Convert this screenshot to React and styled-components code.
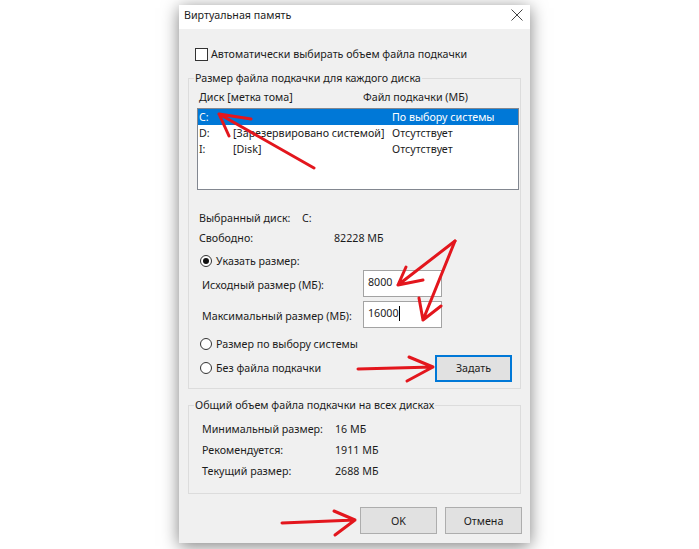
import React from 'react'
import styled, {createGlobalStyle} from 'styled-components'


const GlobalStyle = createGlobalStyle`
    html, body {
        margin: 0;
        padding: 0;
        background: #fff;
    }
    body {
        font-family: "Noto Sans", "Liberation Sans", sans-serif;
        font-size: 10.7px;
        color: #1c1c1c;
        white-space: nowrap;
    }
`;

const Page = styled.div`
    position: relative;
    width: 699px;
    height: 549px;
    overflow: hidden;
    box-sizing: border-box;
    padding: 5px 0 0 179px;
`;

const Dialog = styled.div`
    width: 351px;
    height: 538px;
    background: #f0f0f0;
    box-shadow: 0 3px 16px rgba(0, 0, 0, 0.5);
    display: flex;
    flex-direction: column;
`;

const TitleBar = styled.div`
    height: 24px;
    background: #fff;
    display: flex;
    align-items: flex-start;
    justify-content: space-between;
    padding: 2px 7px 0 5px;
    box-sizing: border-box;
    line-height: 16px;
`;

const CloseBtn = styled.svg`
    margin-top: 2px;
`;

const Body = styled.div`
    display: flex;
    flex-direction: column;
    padding: 0 9px;
`;

const CheckRow = styled.label`
    display: flex;
    align-items: center;
    height: 16px;
    margin: 17px 0 0 7px;
    gap: 3px;
`;

const CheckBox = styled.span`
    width: 11px;
    height: 11px;
    border: 1px solid #333;
    background: #fff;
`;

const Group = styled.fieldset`
    margin: ${p => p.$top}px 0 0 0;
    padding: 0;
    height: ${p => p.$height}px;
    box-sizing: border-box;
    border: 1px solid #dcdcdc;
    min-width: 0;
    display: flex;
    flex-direction: column;
`;

const Legend = styled.legend`
    margin-left: 5px;
    padding: 0 1px;
    line-height: 16px;
`;

const Columns = styled.div`
    display: grid;
    grid-template-columns: 164px 1fr;
    height: 16px;
    line-height: 16px;
    margin: 3px 0 0 10px;
`;

const ListBox = styled.div`
    margin: 3px 0 0 8px;
    width: 322px;
    height: 82px;
    box-sizing: border-box;
    border: 1px solid #828790;
    background: #fff;
`;

const ListRow = styled.div`
    display: grid;
    grid-template-columns: 34px 159px 1fr;
    height: 16px;
    line-height: 16px;
    padding-left: 1px;
    background: ${p => p.$selected ? '#0078d7' : 'transparent'};
    color: ${p => p.$selected ? '#fff' : 'inherit'};
`;

const InfoRow = styled.div`
    display: grid;
    grid-template-columns: ${p => p.$col}px 1fr;
    height: 16px;
    line-height: 16px;
    margin: ${p => p.$top}px 0 0 ${p => p.$left}px;
`;

const RadioRow = styled.div`
    display: flex;
    align-items: center;
    gap: 4px;
    height: 16px;
    margin: ${p => p.$top}px 0 0 11px;
`;

const Radio = styled.span`
    width: 10px;
    height: 10px;
    border: 1px solid #333;
    border-radius: 50%;
    background: #fff;
    display: flex;
    align-items: center;
    justify-content: center;

    &::after {
        content: '';
        width: 6px;
        height: 6px;
        border-radius: 50%;
        background: ${p => p.$checked ? '#111' : 'transparent'};
    }
`;

const FieldRow = styled.div`
    display: grid;
    grid-template-columns: 161px 79px;
    align-items: center;
    margin: ${p => p.$top}px 0 0 13px;
`;

const FieldLabel = styled.span`
    padding-top: 3px;
`;

const TextInput = styled.div`
    height: 27px;
    box-sizing: border-box;
    border: 1px solid #a3a3a3;
    background: #fff;
    padding: 3px 0 0 4px;
    line-height: 16px;
    display: flex;
    align-items: flex-start;
`;

const Caret = styled.span`
    width: 1px;
    height: 15px;
    background: #000;
    margin-top: 1px;
`;

const SetRow = styled.div`
    display: flex;
    align-items: center;
    justify-content: space-between;
    height: 26px;
    margin: 3px 8px 0 11px;
`;

const RadioLabel = styled.span`
    display: flex;
    align-items: center;
    gap: 4px;
`;

const Button = styled.button`
    width: ${p => p.$width}px;
    height: 27px;
    box-sizing: border-box;
    font: inherit;
    color: inherit;
    background: #e1e1e1;
    border: 1px solid ${p => p.$focused ? '#0078d7' : '#adadad'};
    box-shadow: ${p => p.$focused ? 'inset 0 0 0 1px #0078d7' : 'none'};
    padding: 0;
`;

const Footer = styled.div`
    display: flex;
    justify-content: flex-end;
    gap: 8px;
    margin: 13px -1px 0 0;
`;

const Arrows = styled.svg`
    position: absolute;
    left: 0;
    top: 0;
    pointer-events: none;
`;


const drives = [
    {id: 'C:', label: '', size: 'По выбору системы', selected: true},
    {id: 'D:', label: '[Зарезервировано системой]', size: 'Отсутствует'},
    {id: 'I:', label: '[Disk]', size: 'Отсутствует'},
];

const arrowPaths = [
    'M314 168 L219 114 M219 114 L251 119 M219 114 L229 136',
    'M455 241 L398 285 M398 285 L406 267 M398 285 L423 280',
    'M455 241 L423 320 M423 320 L419 298 M423 320 L441 306',
    'M358 369 L433 367 M409 357 L433 367 L407 381',
    'M282 523 L355 520 M334 511 L355 520 L335 535',
];


const App = () => {
    return (
        <Page>
            <GlobalStyle/>
            <Dialog>
                <TitleBar>
                    <span>Виртуальная память</span>
                    <CloseBtn width="12" height="12" viewBox="0 0 12 12">
                        <path d="M0.5 0.5 L11.5 11.5 M11.5 0.5 L0.5 11.5" stroke="#444" strokeWidth="1" fill="none"/>
                    </CloseBtn>
                </TitleBar>
                <Body>
                    <CheckRow>
                        <CheckBox/>
                        Автоматически выбирать объем файла подкачки
                    </CheckRow>

                    <Group $top={8} $height={319}>
                        <Legend>Размер файла подкачки для каждого диска</Legend>
                        <Columns>
                            <span>Диск [метка тома]</span>
                            <span>Файл подкачки (МБ)</span>
                        </Columns>
                        <ListBox>
                            {drives.map(d => (
                                <ListRow key={d.id} $selected={d.selected}>
                                    <span>{d.id}</span>
                                    <span>{d.label}</span>
                                    <span>{d.size}</span>
                                </ListRow>
                            ))}
                        </ListBox>
                        <InfoRow $top={20} $left={10} $col={103}>
                            <span>Выбранный диск:</span>
                            <span>C:</span>
                        </InfoRow>
                        <InfoRow $top={4} $left={10} $col={135}>
                            <span>Свободно:</span>
                            <span>82228 МБ</span>
                        </InfoRow>
                        <RadioRow $top={7}>
                            <Radio $checked/>
                            Указать размер:
                        </RadioRow>
                        <FieldRow $top={1}>
                            <FieldLabel>Исходный размер (МБ):</FieldLabel>
                            <TextInput>8000</TextInput>
                        </FieldRow>
                        <FieldRow $top={4}>
                            <FieldLabel>Максимальный размер (МБ):</FieldLabel>
                            <TextInput>16000<Caret/></TextInput>
                        </FieldRow>
                        <RadioRow $top={8}>
                            <Radio/>
                            Размер по выбору системы
                        </RadioRow>
                        <SetRow>
                            <RadioLabel>
                                <Radio/>
                                Без файла подкачки
                            </RadioLabel>
                            <Button $width={77} $focused>Задать</Button>
                        </SetRow>
                    </Group>

                    <Group $top={8} $height={97}>
                        <Legend>Общий объем файла подкачки на всех дисках</Legend>
                        <InfoRow $top={8} $left={13} $col={133}>
                            <span>Минимальный размер:</span>
                            <span>16 МБ</span>
                        </InfoRow>
                        <InfoRow $top={5} $left={13} $col={133}>
                            <span>Рекомендуется:</span>
                            <span>1911 МБ</span>
                        </InfoRow>
                        <InfoRow $top={5} $left={13} $col={133}>
                            <span>Текущий размер:</span>
                            <span>2688 МБ</span>
                        </InfoRow>
                    </Group>

                    <Footer>
                        <Button $width={77}>OK</Button>
                        <Button $width={77}>Отмена</Button>
                    </Footer>
                </Body>
            </Dialog>

            <Arrows width="699" height="549" viewBox="0 0 699 549">
                {arrowPaths.map((d, i) => (
                    <path key={i} d={d} stroke="#e3161d" strokeWidth="3" strokeLinecap="round" strokeLinejoin="round" fill="none"/>
                ))}
            </Arrows>
        </Page>
    )
};


export default App;
